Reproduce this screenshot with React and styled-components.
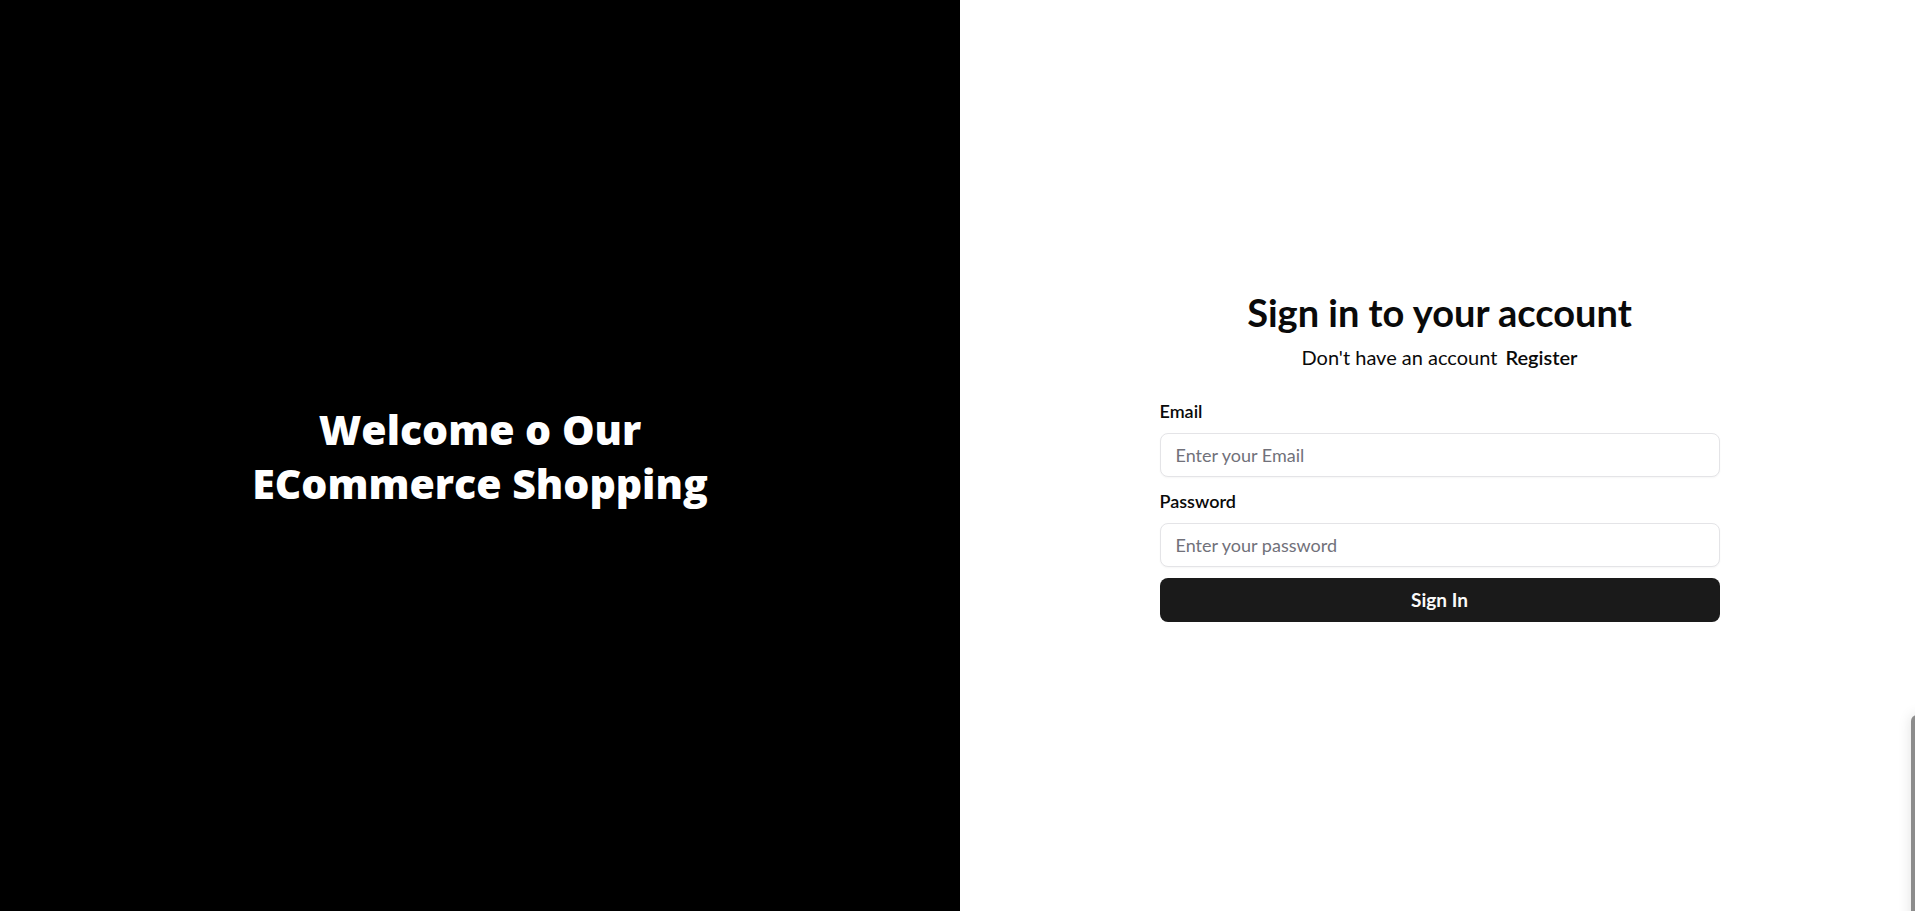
import React from 'react';
import styled, { createGlobalStyle } from 'styled-components';

const GlobalStyle = createGlobalStyle`
  html, body {
    margin: 0;
    padding: 0;
    overflow: hidden;
  }
  body {
    font-family: 'Lato', 'Noto Sans', sans-serif;
    color: #0a0a0a;
    background: #ffffff;
  }
  * {
    box-sizing: border-box;
  }
`;

// Layout
const Page = styled.div`
  display: flex;
  min-height: 100vh;
`;

const BrandPanel = styled.aside`
  flex: 0 0 960px;
  background: #000000;
  display: flex;
  align-items: center;
  justify-content: center;
  padding: 0 48px;
`;

const BrandTitle = styled.h1`
  margin: 0;
  max-width: 500px;
  text-align: center;
  color: #ffffff;
  font-family: 'Open Sans', 'Lato', sans-serif;
  font-size: 41px;
  line-height: 54px;
  font-weight: 800;
  letter-spacing: 0;
`;

const FormPanel = styled.main`
  flex: 1;
  display: flex;
  align-items: center;
  justify-content: center;
  padding: 0 0 0 4px;
`;

const FormCard = styled.div`
  width: 560px;
  display: flex;
  flex-direction: column;
`;

// Header
const Header = styled.div`
  text-align: center;
  margin-bottom: 29px;
`;

const Title = styled.h2`
  margin: 0;
  font-size: 38px;
  line-height: 44px;
  font-weight: 700;
  color: #0a0a0a;
`;

const Subtitle = styled.p`
  margin: 10px 0 0;
  font-size: 20px;
  line-height: 26px;
  color: #0a0a0a;
`;

const RegisterLink = styled.a`
  margin-left: 8px;
  font-weight: 600;
  color: #0a0a0a;
  text-decoration: none;
  cursor: pointer;
`;

// Form
const Form = styled.form`
  display: flex;
  flex-direction: column;
`;

const Field = styled.div`
  display: flex;
  flex-direction: column;
  gap: 10px;
  margin-bottom: 12px;
`;

const Label = styled.label`
  font-size: 18px;
  line-height: 24px;
  font-weight: 600;
  color: #0a0a0a;
`;

const Input = styled.input`
  height: 44px;
  width: 100%;
  padding: 0 15px;
  border: 1px solid #e4e4e7;
  border-radius: 8px;
  background: #ffffff;
  font-family: inherit;
  font-size: 18px;
  color: #0a0a0a;
  outline: none;
  box-shadow: 0 1px 2px rgba(0, 0, 0, 0.04);

  &::placeholder {
    color: #71717a;
  }
`;

const SubmitButton = styled.button`
  height: 44px;
  width: 100%;
  margin-top: -1px;
  border: none;
  border-radius: 8px;
  background: #1a1a1a;
  color: #fafafa;
  font-family: inherit;
  font-size: 19px;
  font-weight: 700;
  cursor: pointer;
`;

// Toast peeking in from the right edge
const ToastEdge = styled.div`
  position: fixed;
  top: 715px;
  left: 1911px;
  width: 40px;
  height: 260px;
  border-radius: 6px;
  background: #8c8c8c;
  box-shadow: 0 0 14px rgba(0, 0, 0, 0.12);
`;

const App = () => {
  return (
    <>
      <GlobalStyle />
      <Page>
        <BrandPanel>
          <BrandTitle>Welcome o Our ECommerce Shopping</BrandTitle>
        </BrandPanel>

        <FormPanel>
          <FormCard>
            <Header>
              <Title>Sign in to your account</Title>
              <Subtitle>
                Don't have an account
                <RegisterLink>Register</RegisterLink>
              </Subtitle>
            </Header>

            <Form onSubmit={e => e.preventDefault()}>
              <Field>
                <Label htmlFor="email">Email</Label>
                <Input id="email" type="email" placeholder="Enter your Email" />
              </Field>
              <Field>
                <Label htmlFor="password">Password</Label>
                <Input id="password" type="password" placeholder="Enter your password" />
              </Field>
              <SubmitButton type="submit">Sign In</SubmitButton>
            </Form>
          </FormCard>
        </FormPanel>
      </Page>
      <ToastEdge />
    </>
  );
};

export default App;
